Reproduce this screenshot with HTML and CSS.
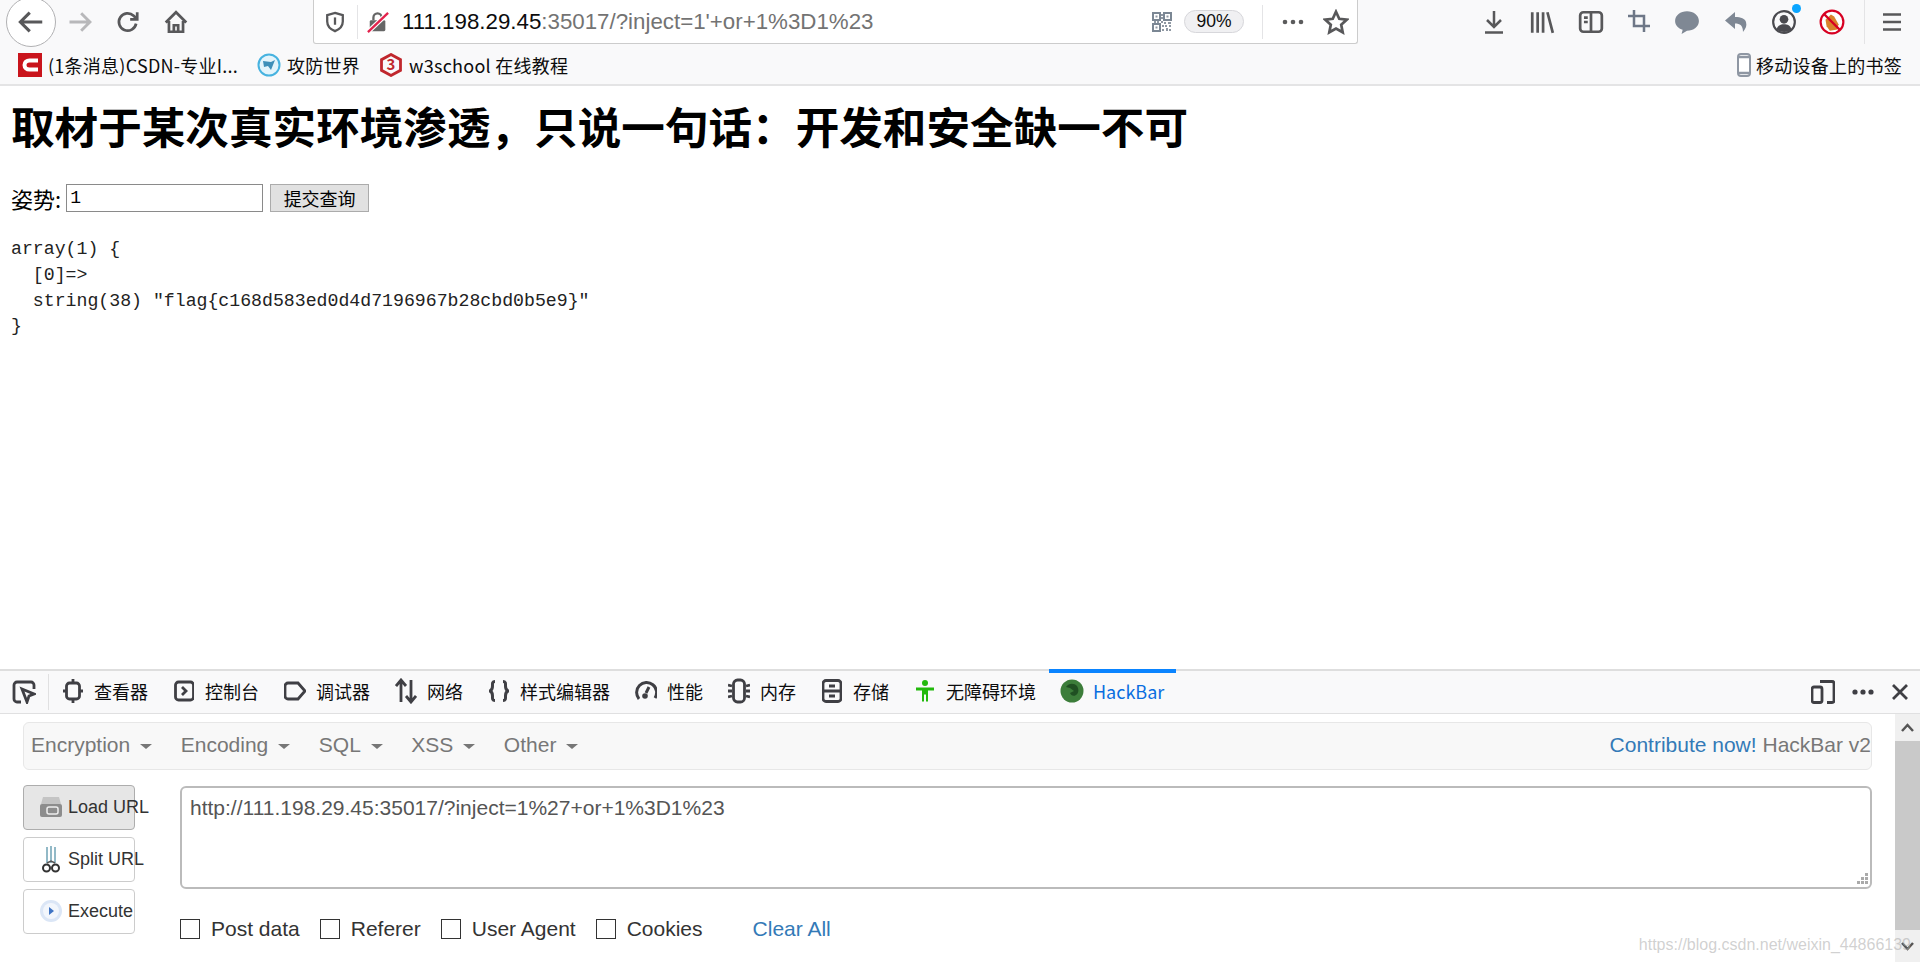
FILE: index.html
```html
<!DOCTYPE html>
<html lang="en">
<head>
  <meta charset="UTF-8" />
  <title>HackBar</title>
  <link rel="stylesheet" href="styles.css">
</head>
<body>
  <!-- Browser toolbar -->
  <div class="toolbar">
    <div class="back-btn">
      <svg width="30" height="30" viewBox="0 0 24 24" class="ico-line"><path d="M21 12H4M11 4.500l-7.500 7.500 7.500 7.500"/></svg>
    </div>
    <div class="tool-btn">
      <svg width="28" height="28" viewBox="0 0 24 24" class="ico-line ico-faded"><path d="M3 12h17M13 4.500l7.500 7.500-7.500 7.500"/></svg>
    </div>
    <div class="tool-btn">
      <svg width="26" height="26" viewBox="0 0 24 24" class="ico-line"><path d="M19.500 13.500a8 8 0 1 1-2.300-7.300L20 9M20.500 3v6.500H14"/></svg>
    </div>
    <div class="tool-btn">
      <svg width="26" height="26" viewBox="0 0 24 24" class="ico-line"><path d="M2.500 12.500L12 3l9.500 9.500M5.500 11v10h13V11M10 21v-6h4v6"/></svg>
    </div>

    <div class="urlbar">
      <svg width="22" height="24" viewBox="0 0 24 24" class="ico-line"><path d="M12 2l8.500 2.500v7c0 5-3.500 8.500-8.500 10.500-5-2-8.500-5.500-8.500-10.500v-7z"/><path d="M12 7v8"/></svg>
      <span class="url-sep"></span>
      <svg class="url-lock" width="22" height="24" viewBox="0 0 24 24"><rect x="3" y="10" width="17" height="12" rx="1.500" fill="#666"/><path d="M7 10V7a4.500 4.500 0 0 1 9 0v3" fill="none" stroke="#666" stroke-width="2.500"/><path d="M23 2L1 23" stroke="#fff" stroke-width="5"/><path d="M23 2L1 23" stroke="#e3224c" stroke-width="2.500"/></svg>
      <span class="url-text"><b>111.198.29.45</b>:35017/?inject=1'+or+1%3D1%23</span>
      <svg width="20" height="20" viewBox="0 0 20 20">
        <path d="M1 1h7v7H1zM12 1h7v7h-7zM1 12h7v7H1z" fill="none" stroke="#7b8794" stroke-width="2"/>
        <path d="M3.500 3.500h2v2h-2zM14.500 3.500h2v2h-2zM3.500 14.500h2v2h-2zM9 9h2v2H9zM12 10h2v2h-2zM16 10h3v2h-3zM10 13h2v2h-2zM13 13h2v2h-2zM17 13h2v2h-2zM10 17h2v2h-2zM14 16h2v3h-2zM17 17h2v2h-2zM9 2h2v2H9zM9 5h2v2H9zM2 9h2v2H2zM5 9h2v2H5z" fill="#8f98a3"/>
      </svg>
      <span class="zoom-pill">90%</span>
      <span class="url-sep url-sep-right"></span>
      <svg class="url-dots" width="24" height="24" viewBox="0 0 24 24" fill="#5b5b5c"><circle cx="4" cy="12" r="2.300"/><circle cx="12" cy="12" r="2.300"/><circle cx="20" cy="12" r="2.300"/></svg>
      <svg class="url-star" width="26" height="26" viewBox="0 0 24 24"><path fill="none" stroke="#58585a" stroke-width="2.500" d="M12 2.500l3 6.500 7 .8-5.200 4.700 1.400 7L12 18l-6.200 3.500 1.400-7L2 9.800 9 9z"/></svg>
    </div>

    <div class="tool-group">
      <div class="tool-item"><svg width="24" height="26" viewBox="0 0 24 24" class="ico-line"><path d="M12 1v15M5 10l7 7 7-7M3 22.500h18"/></svg></div>
      <div class="tool-item"><svg width="26" height="26" viewBox="0 0 24 24" class="ico-line"><path d="M3 3v19M8 3v19M13 3v19M17 3l5 19"/></svg></div>
      <div class="tool-item"><svg width="26" height="26" viewBox="0 0 24 24" class="ico-line"><rect x="2" y="3" width="20" height="18" rx="3"/><path d="M12 3v18M5.500 8H9M5.500 12H9" stroke-width="2"/></svg></div>
      <div class="tool-item"><svg width="24" height="24" viewBox="0 0 24 24" class="ico-line ico-slate"><path d="M7 1v16h16M1 7h16v16" stroke-width="3.500"/></svg></div>
      <div class="tool-item"><svg width="26" height="26" viewBox="0 0 24 24"><path d="M12 2c6 0 11 3.800 11 9s-5 9-11 9l-5 3 1-3.800C4 17.800 1 14.800 1 11c0-5.200 5-9 11-9z" fill="#7f8894"/></svg></div>
      <div class="tool-item"><svg width="24" height="26" viewBox="0 0 24 24"><path d="M11 2L1 10.500l10 8.500v-5.500c5 0 8 2 8 8.500 3-4 4-6 3-10-1-3.500-5-5-11-5z" fill="#7f8894"/></svg></div>
      <div class="tool-item account"><svg width="26" height="26" viewBox="0 0 24 24"><circle cx="12" cy="12" r="10" fill="none" stroke="#4a4a4f" stroke-width="2"/><circle cx="12" cy="9.500" r="4" fill="#4a4a4f"/><path d="M5 19c1-4 4-5 7-5s6 1 7 5c-4 3-10 3-14 0z" fill="#4a4a4f"/></svg><span class="account-dot"></span></div>
      <div class="tool-item"><svg width="26" height="26" viewBox="0 0 24 24"><circle cx="12" cy="12" r="10.500" fill="#fff" stroke="#d70022" stroke-width="2"/><path d="M6 10l5-5 3 2 4 7-1 5-7 1-3-4z" fill="#d9822b"/><path d="M4.500 4.500l15 15" stroke="#d70022" stroke-width="2"/></svg></div>
    </div>
    <span class="tool-sep"></span>
    <div class="menu-btn"><svg width="24" height="24" viewBox="0 0 24 24" class="ico-line"><path d="M3 4.500h18M3 12h18M3 19.500h18"/></svg></div>
  </div>

  <!-- Bookmarks -->
  <div class="bookmarks">
    <div class="bookmark">
      <svg width="24" height="24" viewBox="0 0 24 24"><rect width="24" height="24" fill="#c9141c"/><path d="M20 7.500h-8.500c-3 0-5 2-5 4.500s2 4.500 5 4.500H20" fill="none" stroke="#fff" stroke-width="4"/></svg>
      <span>(1条消息)CSDN-专业I...</span>
    </div>
    <div class="bookmark">
      <svg width="24" height="24" viewBox="0 0 24 24"><circle cx="12" cy="12" r="10.500" fill="#e4f4fb" stroke="#47b3e0" stroke-width="2"/><path d="M6 8l8 1 4-2-2 5-2 5-3-4-4 1z" fill="#3f8fb8"/></svg>
      <span>攻防世界</span>
    </div>
    <div class="bookmark">
      <svg width="24" height="24" viewBox="0 0 24 24"><path d="M12 1.500l9.500 5.200v10.600L12 22.500l-9.500-5.200V6.700z" fill="none" stroke="#c0272d" stroke-width="2.800"/><text x="12" y="17" text-anchor="middle" class="w3-mark">3</text></svg>
      <span>w3school 在线教程</span>
    </div>
    <div class="bookmark bookmark-mobile">
      <svg width="14" height="24" viewBox="0 0 14 24"><rect x="1" y="1" width="12" height="22" rx="3" fill="#fff" stroke="#8f97a3" stroke-width="2"/><path d="M1 4h12M1 20h12" stroke="#8f97a3" stroke-width="2.500"/></svg>
      <span>移动设备上的书签</span>
    </div>
  </div>

  <!-- Page content -->
  <div class="page">
    <h1>取材于某次真实环境渗透&#xFF0C;只说一句话&#xFF1A;开发和安全缺一不可</h1>
    <form class="inject-form">
      <label for="inject">姿势:</label>
      <input type="text" id="inject" value="1">
      <button type="button">提交查询</button>
    </form>
    <pre>array(1) {
  [0]=&gt;
  string(38) "flag{c168d583ed0d4d7196967b28cbd0b5e9}"
}</pre>
  </div>

  <!-- Devtools -->
  <div class="devtools">
    <div class="dev-tabs">
      <div class="picker"><svg width="24" height="24" viewBox="0 0 24 24" class="ico-dev"><path d="M9 22H5a3 3 0 0 1-3-3V5a3 3 0 0 1 3-3h14a3 3 0 0 1 3 3v4"/><path d="M10 9l12 5-5 2-2 6z" fill="#333" stroke-width="1"/></svg></div>
      <span class="picker-sep"></span>
      <div class="dev-tab"><svg width="20" height="24" viewBox="0 0 20 24" class="ico-dev"><rect x="3.500" y="4" width="13" height="16" rx="3"/><path d="M10 0v4M10 20v4M0 12h3.500M16.500 12H20" stroke-width="2"/></svg><span>查看器</span></div>
      <div class="dev-tab"><svg width="20" height="24" viewBox="0 0 20 24" class="ico-dev"><rect x="1.500" y="3" width="18" height="18" rx="3"/><path d="M8 8l4 4-4 4" stroke-width="2"/></svg><span>控制台</span></div>
      <div class="dev-tab"><svg width="22" height="24" viewBox="0 0 22 24" class="ico-dev"><path d="M4 4h10l7 8-7 8H4a3 3 0 0 1-3-3V7a3 3 0 0 1 3-3z"/></svg><span>调试器</span></div>
      <div class="dev-tab"><svg width="22" height="26" viewBox="0 0 22 26" class="ico-dev"><path d="M6 24V2M1 8l5-6 5 6M16 2v22M11 18l5 6 5-6"/></svg><span>网络</span></div>
      <div class="dev-tab"><svg width="20" height="24" viewBox="0 0 20 24" class="ico-dev ico-heavy"><path d="M6 2.500c-3 0-2.500 2.500-2.500 4.500s0 4-2.500 5c2.500 1 2.500 3 2.500 5s-.5 4.500 2.500 4.500M14 2.500c3 0 2.500 2.500 2.500 4.500s0 4 2.500 5c-2.500 1-2.500 3-2.500 5s.5 4.500-2.500 4.500"/></svg><span>样式编辑器</span></div>
      <div class="dev-tab"><svg width="22" height="24" viewBox="0 0 22 24" class="ico-dev ico-heavy"><path d="M4 20a10 10 0 1 1 16-1"/><path d="M11 14l3-6" stroke-width="2"/><circle cx="10" cy="17" r="2.800" fill="#3f3f44" stroke="none"/></svg><span>性能</span></div>
      <div class="dev-tab"><svg width="22" height="26" viewBox="0 0 22 26" class="ico-dev"><rect x="5.500" y="2" width="11" height="22" rx="4"/><path d="M0 7l4 1M0 13h4M0 19l4-1M22 7l-4 1M22 13h-4M22 19l-4-1" stroke-width="1.800"/></svg><span>内存</span></div>
      <div class="dev-tab"><svg width="20" height="24" viewBox="0 0 20 24" class="ico-dev"><rect x="1" y="1.500" width="18" height="21" rx="3"/><path d="M1 12h18M7 7h6M7 17h6" stroke-width="2"/></svg><span>存储</span></div>
      <div class="dev-tab"><svg width="20" height="24" viewBox="0 0 20 24"><circle cx="10" cy="4" r="3" fill="#22b90c"/><path d="M1 8.500h18v3h-6v11h-2v-7H9v7H7v-11H1z" fill="#22b90c"/></svg><span>无障碍环境</span></div>
      <div class="dev-tab dev-tab-active"><svg width="24" height="24" viewBox="0 0 24 24"><circle cx="12" cy="12" r="11.500" fill="#3c7d3a"/><path d="M6 8c3-4 8-4 11-1 2 3 2 7-1 9-3 2-5 0-6-2l4-2-4-3z" fill="#1f4f22"/></svg><span>HackBar</span></div>
      <div class="dev-actions">
        <svg width="24" height="24" viewBox="0 0 24 24" class="ico-dev"><path d="M9 1.500h12a2 2 0 0 1 2 2v17a2 2 0 0 1-2 2h-5"/><rect x="1" y="7" width="10" height="15.500" rx="2"/></svg>
        <svg width="24" height="24" viewBox="0 0 24 24" fill="#3f3f44"><circle cx="4" cy="12" r="2.600"/><circle cx="12" cy="12" r="2.600"/><circle cx="20" cy="12" r="2.600"/></svg>
        <svg width="18" height="18" viewBox="0 0 18 18" class="ico-dev"><path d="M2 2l14 14M16 2L2 16"/></svg>
      </div>
    </div>

    <div class="hackbar">
      <div class="hb-main">
        <div class="hb-nav">
          <span class="hb-menu">Encryption</span>
          <span class="hb-menu">Encoding</span>
          <span class="hb-menu">SQL</span>
          <span class="hb-menu">XSS</span>
          <span class="hb-menu">Other</span>
          <span class="hb-brand"><a href="#">Contribute now!</a> HackBar v2</span>
        </div>
        <div class="hb-body">
          <div class="hb-buttons">
            <button class="hb-btn hb-btn-active">
              <svg width="24" height="22" viewBox="0 0 24 22"><path d="M4 1h16l2 7H2z" fill="#c4c4c4"/><rect x="1" y="8" width="22" height="13" rx="2" fill="#8d8d8d"/><rect x="8" y="11" width="11" height="7" rx="2" fill="none" stroke="#eee" stroke-width="1.500"/></svg>
              Load URL
            </button>
            <button class="hb-btn">
              <svg width="24" height="28" viewBox="0 0 24 28" fill="none"><path d="M8 18V2M12 18V1M16 18V2" stroke="#6fa3b5" stroke-width="1.500"/><path d="M8 18l4-2 4 2" stroke="#555" stroke-width="1.500"/><circle cx="7.500" cy="23" r="3.500" stroke="#333" stroke-width="2"/><circle cx="16.500" cy="23" r="3.500" stroke="#333" stroke-width="2"/></svg>
              Split URL
            </button>
            <button class="hb-btn">
              <svg width="24" height="24" viewBox="0 0 24 24"><circle cx="12" cy="12" r="11" fill="#dbe6f6"/><circle cx="12" cy="12" r="8" fill="#f2f6fc"/><path d="M10 8l5 4-5 4z" fill="#3f74c4"/></svg>
              Execute
            </button>
          </div>
          <div class="hb-right">
            <div class="hb-url-wrap">
              <textarea class="hb-url">http://111.198.29.45:35017/?inject=1%27+or+1%3D1%23</textarea>
              <svg class="hb-grip" width="12" height="12" viewBox="0 0 12 12" fill="#aaa"><path d="M9 0h3v3H9zM5 4h3v3H5zM9 4h3v3H9zM1 8h3v3H1zM5 8h3v3H5zM9 8h3v3H9z"/></svg>
            </div>
            <div class="hb-options">
              <label class="hb-check"><input type="checkbox">Post data</label>
              <label class="hb-check"><input type="checkbox">Referer</label>
              <label class="hb-check"><input type="checkbox">User Agent</label>
              <label class="hb-check"><input type="checkbox">Cookies</label>
              <a href="#" class="hb-clear">Clear All</a>
            </div>
          </div>
        </div>
      </div>
      <div class="hb-scroll">
        <svg width="25" height="27" viewBox="0 0 25 27" class="scroll-arrow"><path d="M7 17l5.500-6 5.500 6"/></svg>
        <div class="hb-thumb"></div>
        <svg width="25" height="32" viewBox="0 0 25 32" class="scroll-arrow"><path d="M7 13l5.500 6 5.500-6"/></svg>
      </div>
    </div>
    <div class="watermark">https://blog.csdn.net/weixin_44866139</div>
  </div>
</body>
</html>
```

FILE: styles.css
```css
* {
  box-sizing: border-box;
}

body {
  margin: 0;
  height: 962px;
  display: flex;
  flex-direction: column;
  overflow: hidden;
  background: #fff;
  color: #0c0c0d;
  font-family: "Liberation Sans", "Noto Sans CJK SC", sans-serif;
  font-size: 18px;
}

svg {
  flex: none;
}

.ico-line path,
.ico-line rect {
  fill: none;
  stroke: #58585a;
  stroke-width: 2.5;
}

.ico-faded path {
  stroke: #b8b8ba;
}

.ico-slate path {
  stroke: #6e7787;
}

.ico-dev path,
.ico-dev rect {
  fill: none;
  stroke: #3f3f44;
  stroke-width: 2.8;
}

.ico-heavy path {
  stroke-width: 3;
}

/* browser toolbar */
.toolbar {
  height: 44px;
  flex: none;
  display: flex;
  align-items: center;
  padding-left: 6px;
  background: #f9f9fa;
  position: relative;
  z-index: 1;
}

.back-btn {
  width: 50px;
  height: 50px;
  flex: none;
  border: 1px solid #b1b1b3;
  border-radius: 50%;
  background: #fff;
  display: flex;
  align-items: center;
  justify-content: center;
}

.tool-btn {
  width: 48px;
  display: flex;
  justify-content: center;
}

.urlbar {
  width: 1045px;
  height: 44px;
  margin-left: 113px;
  flex: none;
  display: flex;
  align-items: center;
  padding: 0 8px 0 10px;
  background: #fff;
  border: 1px solid #ccc;
  border-top: none;
  border-radius: 0 0 3px 3px;
}

.url-sep {
  width: 1px;
  height: 34px;
  margin-left: 11px;
  background: #e4e4e6;
}

.url-lock {
  margin-left: 9px;
}

.url-text {
  flex: 1;
  margin-left: 13px;
  font-size: 22.3px;
  color: #737373;
  white-space: nowrap;
}

.url-text b {
  font-weight: normal;
  color: #0c0c0d;
}

.zoom-pill {
  width: 60px;
  height: 23px;
  margin-left: 12px;
  border: 1px solid #d7d7db;
  border-radius: 12px;
  background: #f0f0f2;
  font-size: 17.5px;
  line-height: 21px;
  text-align: center;
}

.url-sep-right {
  margin-left: 18px;
}

.url-dots {
  margin-left: 18px;
}

.url-star {
  margin-left: 18px;
}

.tool-group {
  display: flex;
  margin-left: 112px;
}

.tool-item {
  width: 48.3px;
  display: flex;
  justify-content: center;
  position: relative;
}

.account-dot {
  position: absolute;
  top: -5px;
  right: 7px;
  width: 9px;
  height: 9px;
  border-radius: 50%;
  background: #0aa5ff;
}

.tool-sep {
  width: 1px;
  height: 44px;
  margin-left: 8px;
  background: #e4e4e6;
}

.menu-btn {
  width: 48px;
  margin-left: 3px;
  display: flex;
  justify-content: center;
}

/* bookmarks */
.bookmarks {
  height: 42px;
  flex: none;
  display: flex;
  align-items: center;
  gap: 19px;
  padding: 1px 18px 0;
  background: #f9f9fa;
  border-bottom: 2px solid #e4e4e5;
  font-family: "Noto Sans CJK SC", sans-serif;
  line-height: 24px;
  letter-spacing: 0.25px;
}

.bookmark {
  display: flex;
  align-items: center;
  gap: 6px;
  white-space: nowrap;
}

.bookmark-mobile {
  margin-left: auto;
  gap: 5px;
}

.w3-mark {
  font-size: 15px;
  font-weight: bold;
  fill: #c0272d;
}

/* page */
.page {
  flex: 1;
  padding: 0 11px;
  overflow: hidden;
}

h1 {
  margin: 8px 0 0;
  font-family: "Noto Sans CJK SC", sans-serif;
  font-size: 43.6px;
  line-height: 62px;
  font-weight: bold;
  color: #000;
  white-space: nowrap;
}

.inject-form {
  margin-top: 28px;
  display: flex;
  align-items: center;
  font-family: "Noto Sans CJK SC", sans-serif;
  font-size: 22px;
  line-height: 28px;
  color: #000;
}

.inject-form input {
  width: 197px;
  height: 28px;
  margin: 0 0 0 5px;
  padding: 1px 3px;
  border: 1px solid #8a8a8a;
  font-family: "Liberation Mono", monospace;
  font-size: 18px;
  color: #000;
}

.inject-form button {
  width: 99px;
  height: 28px;
  margin-left: 7px;
  padding: 0;
  border: 1px solid #ababab;
  background: #e1e1e1;
  font-family: "Noto Sans CJK SC", sans-serif;
  font-size: 18px;
  line-height: 26px;
  color: #000;
}

pre {
  margin: 25px 0 0;
  font-family: "Liberation Mono", "Noto Sans CJK SC", monospace;
  font-size: 18.2px;
  line-height: 25.8px;
  color: #222;
}

/* devtools */
.devtools {
  height: 293px;
  flex: none;
  display: flex;
  flex-direction: column;
  border-top: 2px solid #dedede;
  position: relative;
}

.dev-tabs {
  height: 43px;
  flex: none;
  display: flex;
  align-items: stretch;
  padding-right: 11px;
  background: #f9f9fa;
  border-bottom: 1px solid #e0e0e1;
}

.picker {
  width: 48px;
  display: flex;
  align-items: center;
  justify-content: center;
}

.picker-sep {
  width: 1px;
  height: 36px;
  margin: 3px 1px 0 0;
  background: #e0e0e1;
}

.dev-tab {
  padding: 0 13px 2px;
  display: flex;
  align-items: center;
  gap: 11px;
  white-space: nowrap;
}

.dev-tab svg[width="22"] {
  margin: 0 -1px;
}

.dev-tab-active {
  width: 127px;
  margin-top: -2px;
  border-top: 4px solid #0a84ff;
  padding: 0 0 5px 11px;
  gap: 9px;
  color: #0a6ee0;
  font-family: "Noto Sans CJK SC", sans-serif;
}

.dev-actions {
  margin-left: auto;
  display: flex;
  align-items: center;
  gap: 16px;
}

.hackbar {
  flex: 1;
  display: flex;
  min-height: 0;
}

.hb-main {
  flex: 1;
  padding: 8px 23px 0;
}

.hb-nav {
  height: 48px;
  display: flex;
  align-items: center;
  padding: 0 0 2px 7px;
  background: #f8f8f8;
  border: 1px solid #e7e7e7;
  border-radius: 6px;
  font-size: 21px;
  color: #777;
}

.hb-menu {
  display: flex;
  align-items: center;
  margin-right: 28.5px;
}

.hb-menu::after {
  content: "";
  margin: 3px 0 0 10px;
  border-top: 5px solid #777;
  border-left: 6px solid transparent;
  border-right: 6px solid transparent;
}

.hb-brand {
  margin-left: auto;
  white-space: nowrap;
}

.hb-brand a,
.hb-clear {
  color: #337ab7;
  text-decoration: none;
}

.hb-body {
  margin-top: 15px;
  display: flex;
  gap: 45px;
}

.hb-buttons {
  width: 112px;
  flex: none;
  display: flex;
  flex-direction: column;
  gap: 7.5px;
}

.hb-btn {
  height: 44.5px;
  padding: 0 0 0 15px;
  display: flex;
  align-items: center;
  gap: 5px;
  background: #fff;
  border: 1px solid #ccc;
  border-radius: 4px;
  font-family: "Liberation Sans", sans-serif;
  font-size: 18px;
  color: #333;
  white-space: nowrap;
}

.hb-btn-active {
  background: #e6e6e6;
  border-color: #adadad;
}

.hb-right {
  flex: 1;
  padding-top: 1px;
}

.hb-url-wrap {
  position: relative;
}

.hb-url {
  display: block;
  width: 100%;
  height: 103px;
  padding: 8px;
  border: 2px solid #bbb;
  border-radius: 6px;
  font-family: "Liberation Sans", sans-serif;
  font-size: 21px;
  line-height: 24px;
  color: #555;
  outline: none;
  resize: none;
}

.hb-grip {
  position: absolute;
  right: 4px;
  bottom: 4px;
}

.hb-options {
  margin-top: 28px;
  display: flex;
  align-items: center;
  gap: 20px;
  font-size: 21px;
  color: #333;
}

.hb-check {
  display: flex;
  align-items: center;
  gap: 11px;
}

.hb-check input {
  appearance: none;
  width: 20px;
  height: 20px;
  margin: 0;
  border: 1px solid #333;
  background: #fff;
}

.hb-clear {
  margin-left: 30px;
}

.hb-scroll {
  width: 25px;
  flex: none;
  display: flex;
  flex-direction: column;
  background: #f0f0f0;
}

.hb-thumb {
  height: 190px;
  background: #c9c9c9;
}

.scroll-arrow path {
  fill: none;
  stroke: #555;
  stroke-width: 2.5;
}

.watermark {
  position: absolute;
  right: 9px;
  bottom: 8px;
  font-size: 16px;
  color: rgba(170, 170, 170, 0.55);
  white-space: nowrap;
}
```
